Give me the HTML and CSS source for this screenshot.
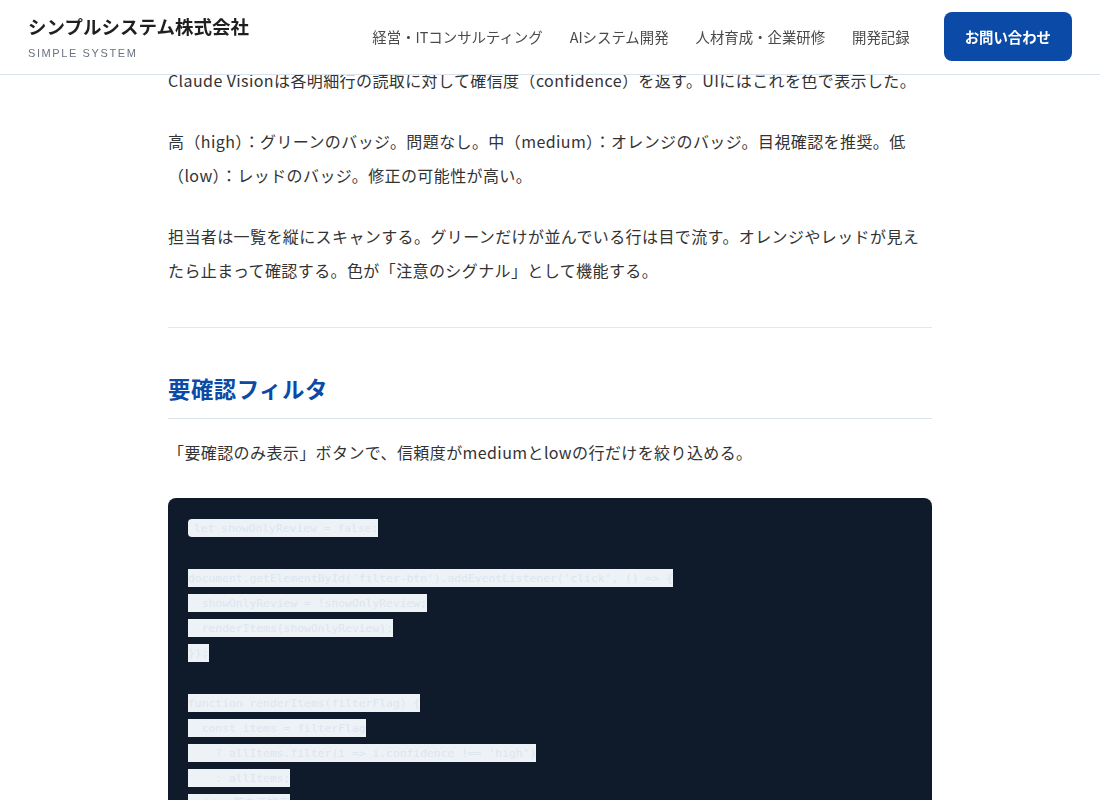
FILE: index.html
```html
<!DOCTYPE html>
<html lang="ja">
<head>
<meta charset="utf-8">
<title>要確認フィルタ | シンプルシステム株式会社</title>
<link rel="stylesheet" href="styles.css">
</head>
<body>
<header class="site-header">
  <div class="logo">
    <div class="logo-name">シンプルシステム株式会社</div>
    <div class="logo-sub">SIMPLE SYSTEM</div>
  </div>
  <div class="header-right">
    <nav class="nav">
      <a class="nav-link" href="#">経営・ITコンサルティング</a>
      <a class="nav-link" href="#">AIシステム開発</a>
      <a class="nav-link" href="#">人材育成・企業研修</a>
      <a class="nav-link" href="#">開発記録</a>
    </nav>
    <a class="cta" href="#">お問い合わせ</a>
  </div>
</header>

<main class="article">
  <p>Claude Visionは各明細行の読取に対して確信度（confidence）を返す。UIにはこれを色で表示した。</p>
  <p>高（high）：グリーンのバッジ。問題なし。中（medium）：オレンジのバッジ。目視確認を推奨。低（low）：レッドのバッジ。修正の可能性が高い。</p>
  <p>担当者は一覧を縦にスキャンする。グリーンだけが並んでいる行は目で流す。オレンジやレッドが見えたら止まって確認する。色が「注意のシグナル」として機能する。</p>
  <hr class="divider">
  <h2 class="section-title">要確認フィルタ</h2>
  <p>「要確認のみ表示」ボタンで、信頼度がmediumとlowの行だけを絞り込める。</p>
  <pre class="code-block"><code>let showOnlyReview = false;

document.getElementById('filter-btn').addEventListener('click', () => {
  showOnlyReview = !showOnlyReview;
  renderItems(showOnlyReview);
});

function renderItems(filterFlag) {
  const items = filterFlag
    ? allItems.filter(i => i.confidence !== 'high')
    : allItems;
  // 一覧を再描画
  renderTable(items);
}</code></pre>
</main>
</body>
</html>
```

FILE: styles.css
```css
html {
  scrollbar-width: none;
}
html::-webkit-scrollbar {
  display: none;
}

body {
  margin: 0;
  background: #ffffff;
  color: #333333;
  font-family: "Noto Sans CJK JP", "Noto Sans", sans-serif;
  font-size: 16px;
  line-height: 34px;
  letter-spacing: 0.4px;
}

a {
  text-decoration: none;
}

/* Header (fixed, overlays scrolled content) */
.site-header {
  position: fixed;
  top: 0;
  left: 0;
  right: 0;
  z-index: 10;
  height: 75px;
  box-sizing: border-box;
  padding: 0 28px 1px;
  display: flex;
  align-items: center;
  justify-content: space-between;
  background: rgba(255, 255, 255, 0.95);
  -webkit-backdrop-filter: blur(10px);
  backdrop-filter: blur(10px);
  border-bottom: 1px solid #d9e3ee;
}

.logo {
  display: flex;
  flex-direction: column;
  gap: 7px;
}

.logo-name {
  font-size: 18.5px;
  font-weight: 700;
  line-height: 26px;
  color: #1f1f1f;
  letter-spacing: 0;
}

.logo-sub {
  font-family: "Liberation Sans", Arial, sans-serif;
  font-size: 11px;
  line-height: 14px;
  letter-spacing: 1.6px;
  color: #6b7280;
}

.header-right {
  display: flex;
  align-items: center;
  gap: 34px;
}

.nav {
  display: flex;
  align-items: center;
  gap: 27px;
}

.nav-link {
  font-size: 14.4px;
  line-height: 20px;
  color: #4a4a4a;
  letter-spacing: 0;
}

.cta {
  display: flex;
  align-items: center;
  height: 49px;
  padding: 0 21px;
  border-radius: 8px;
  background: #0b4aa6;
  color: #ffffff;
  font-size: 14.4px;
  font-weight: 700;
  letter-spacing: 0;
}

/* Article */
.article {
  width: 764px;
  margin: 0 auto;
  padding-top: 63px;
}

.article p {
  margin: 0 0 27px;
}

.divider {
  border: 0;
  border-top: 1px solid #e2e8f0;
  height: 0;
  margin: 40px 0;
}

.section-title {
  margin: 44px 0 16px;
  padding-bottom: 14px;
  border-bottom: 1px solid #dde3ea;
  font-size: 22.4px;
  line-height: 32px;
  font-weight: 700;
  color: #0b4aa6;
  letter-spacing: 0.5px;
}

.code-block {
  margin: 29px 0 40px;
  padding: 18px 20px;
  background: #0f1b2b;
  border-radius: 8px;
  font-family: "DejaVu Sans Mono", "Noto Sans CJK JP", monospace;
  font-size: 11.35px;
  line-height: 25px;
  letter-spacing: 0;
  white-space: pre;
  overflow: hidden;
}

.code-block code {
  font-family: inherit;
  background: #edf2f7;
  color: #dde5ef;
  padding: 2.4px 6px;
  border-radius: 4px;
}
```
